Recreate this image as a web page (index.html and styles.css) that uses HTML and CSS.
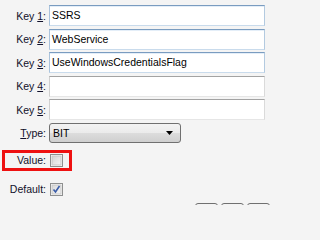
FILE: index.html
```html
<!DOCTYPE html>
<html>
<head>
<meta charset="utf-8">
<link rel="stylesheet" href="styles.css">
</head>
<body>
<div class="form">
  <div class="rows">
    <div class="row"><span class="lbl">Key <u>1</u>:</span><div class="field active">SSRS</div></div>
    <div class="row"><span class="lbl">Key <u>2</u>:</span><div class="field active">WebService</div></div>
    <div class="row"><span class="lbl">Key <u>3</u>:</span><div class="field active">UseWindowsCredentialsFlag</div></div>
    <div class="row"><span class="lbl">Key <u>4</u>:</span><div class="field"></div></div>
    <div class="row"><span class="lbl">Key <u>5</u>:</span><div class="field"></div></div>
    <div class="row"><span class="lbl"><u>T</u>ype:</span>
      <div class="select"><span>BIT</span>
        <svg class="arrow" width="7" height="4" viewBox="0 0 7 4"><path d="M0 0H7L3.5 4Z" fill="#000"/></svg>
      </div>
    </div>
  </div>
  <div class="value-box">
    <span class="lbl">Value:</span>
    <svg class="cb" width="13" height="13" viewBox="0 0 13 13">
      <defs><linearGradient id="g1" x1="0" y1="0" x2="1" y2="1"><stop offset="0" stop-color="#d4d4d4"/><stop offset="1" stop-color="#f6f6f6"/></linearGradient></defs>
      <rect x="0.5" y="0.5" width="12" height="12" fill="#fff" stroke="#8e8f8f"/>
      <rect x="2" y="2" width="9" height="9" fill="url(#g1)" stroke="#c8c8c8" stroke-width="1"/>
    </svg>
  </div>
  <div class="default-row">
    <span class="lbl">Default:</span>
    <svg class="cb" width="13" height="13" viewBox="0 0 13 13">
      <defs><linearGradient id="g2" x1="0" y1="0" x2="1" y2="1"><stop offset="0" stop-color="#d8d8d8"/><stop offset="1" stop-color="#f6f6f6"/></linearGradient></defs>
      <rect x="0.5" y="0.5" width="12" height="12" fill="#fff" stroke="#8e8f8f"/>
      <rect x="2" y="2" width="9" height="9" fill="url(#g2)" stroke="#c8c8c8" stroke-width="1"/>
      <path d="M3.5 6.5L5.5 9L9.5 3" fill="none" stroke="#3a5ca8" stroke-width="1.6"/>
    </svg>
  </div>
  <div class="buttons">
    <div class="btn"></div><div class="btn"></div><div class="btn"></div>
  </div>
</div>
</body>
</html>
```
FILE: styles.css
```css
html, body {
  margin: 0;
  padding: 0;
  background: #f4f4f4;
  overflow: hidden;
}
body {
  width: 272px;
  height: 205px;
  font-family: "Liberation Sans", Arial, sans-serif;
  font-size: 10.5px;
  color: #10102a;
}
.form {
  padding-top: 5px;
}
.rows {
  display: flex;
  flex-direction: column;
  gap: 2.5px;
}
.row {
  display: grid;
  grid-template-columns: 46px 216px;
  column-gap: 3px;
  align-items: center;
  height: 21px;
}
.lbl {
  text-align: right;
  white-space: nowrap;
}
.field {
  box-sizing: border-box;
  height: 21px;
  background: #fff;
  border: 1px solid;
  border-color: #a3a3a3 #dadada #e6e6e6 #d0d0d0;
  padding-left: 2px;
  line-height: 19px;
  color: #000;
}
.field.active {
  border-color: #7a9cc0 #b3cae0 #c9dbec #aac3dc;
  box-shadow: inset 0 1px 0 #e4eef8;
}
.select {
  box-sizing: border-box;
  width: 132px;
  height: 20px;
  border: 1px solid #707070;
  border-radius: 3px;
  background: linear-gradient(#f3f3f3, #ebebeb 50%, #dddddd 50%, #cfcfcf);
  display: flex;
  align-items: center;
  justify-content: space-between;
  padding: 0 7px 0 3px;
  color: #000;
}
.arrow {
  display: block;
}
.value-box {
  box-sizing: border-box;
  margin: 6px 0 0 2px;
  width: 70px;
  height: 21px;
  border: 3px solid #ee1111;
  display: flex;
  align-items: center;
}
.value-box .lbl {
  width: 41px;
}
.cb {
  display: block;
  margin-left: 4px;
}
.default-row {
  margin: 12px 0 0 2px;
  display: flex;
  align-items: center;
  height: 13px;
}
.default-row .lbl {
  width: 44px;
}
.default-row .cb {
  margin-left: 4px;
}
.buttons {
  display: flex;
  justify-content: flex-end;
  gap: 3px;
  margin-top: 7px;
  padding-right: 2px;
}
.btn {
  width: 23px;
  height: 20px;
  box-sizing: border-box;
  border: 1px solid #707070;
  border-radius: 3px;
  background: linear-gradient(#f3f3f3, #e6e6e6);
}
```
